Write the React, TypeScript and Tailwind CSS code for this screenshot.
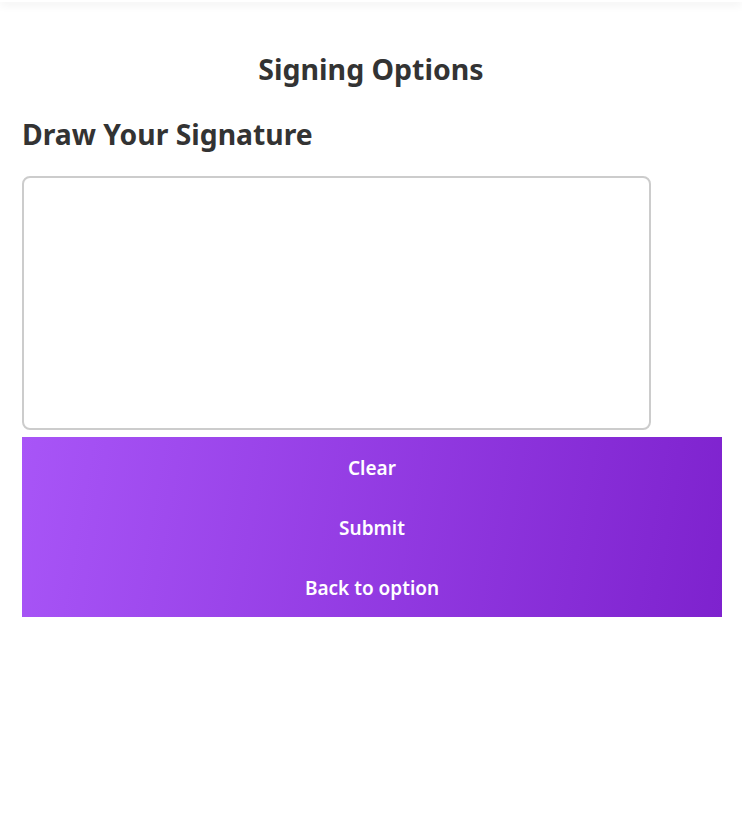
import React from "react";

export default function App() {
  return (
    <div className="min-h-[823px] bg-white text-[#333]" style={{ fontFamily: '"Noto Sans", "Open Sans", sans-serif' }}>
      <div className="h-[2px] bg-white shadow-[0_1px_10px_rgba(0,0,0,0.18)]" />
      <div className="px-[22px]">
        <h2 className="mt-[48px] text-center text-[28.5px] font-bold leading-[38px]">Signing Options</h2>
        <h3 className="mt-[27px] text-[28.3px] font-bold leading-[38px]">Draw Your Signature</h3>
        <div className="mt-[23px] h-[254px] w-[629px] rounded-[8px] border-2 border-[#cccccc] bg-white" />
        <div className="mt-[7px] flex w-[700px] flex-col bg-[linear-gradient(100deg,#a855f7,#7e22ce)]">
          <button className="h-[60px] pt-[2px] text-[19px] font-semibold text-white">Clear</button>
          <button className="h-[60px] pt-[2px] text-[19px] font-semibold text-white">Submit</button>
          <button className="h-[60px] pt-[2px] text-[19px] font-semibold text-white">Back to option</button>
        </div>
      </div>
    </div>
  );
}
